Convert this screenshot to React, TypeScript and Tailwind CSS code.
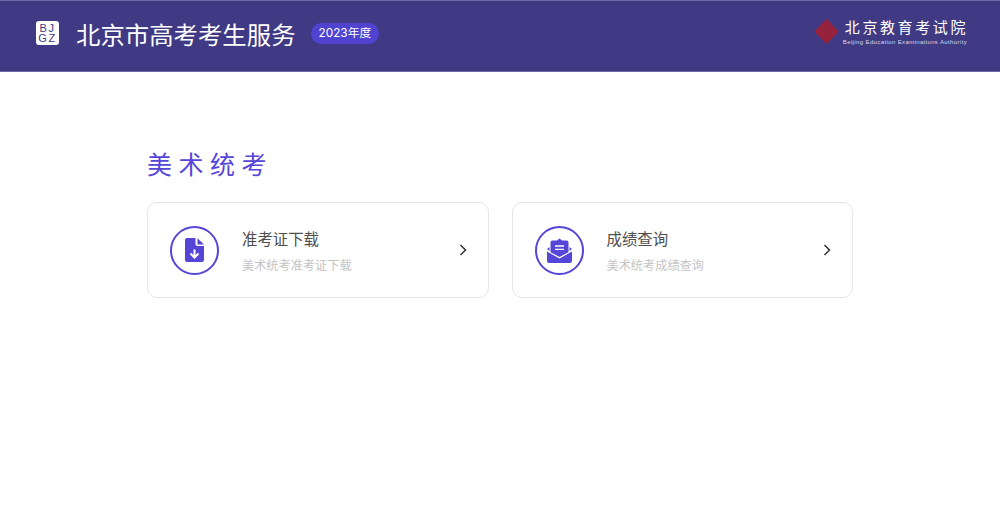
const cjk = "font-['Inter','Noto_Sans_CJK_SC',sans-serif]";

function FileDownloadIcon() {
  return (
    <svg width="19" height="24" viewBox="0 0 19 24">
      <path
        fill="#5546d8"
        d="M2 0H10.5V6C10.5 7.1 11.4 8 12.5 8H19V22C19 23.1 18.1 24 17 24H2C0.9 24 0 23.1 0 22V2C0 0.9 0.9 0 2 0Z"
      />
      <path fill="#5546d8" d="M12.5 0.3L19 6.5H12.5Z" />
      <path d="M9.5 11.5V19M5.5 15.5L9.5 19.5L13.5 15.5" fill="none" stroke="#ffffff" strokeWidth="2" />
    </svg>
  );
}

function MailOpenIcon() {
  return (
    <svg width="25" height="25" viewBox="0 0 25 25">
      <path fill="#5546d8" d="M0 11L2.5 9V13ZM25 11L22.5 9V13Z" />
      <path
        fill="#5546d8"
        d="M0 13.5L12.5 20.5L25 13.5V23C25 24.1 24.1 25 23 25H2C0.9 25 0 24.1 0 23Z"
      />
      <path
        fill="#5546d8"
        fillRule="evenodd"
        d="M5.5 2.5H10L12.5 0.5L15 2.5H19.5C20.6 2.5 21.5 3.4 21.5 4.5V14.2L12.5 19L3.5 14.2V4.5C3.5 3.4 4.4 2.5 5.5 2.5ZM8 7.3V8.7H17V7.3ZM8 10.7V12.1H17V10.7Z"
      />
    </svg>
  );
}

function Chevron() {
  return (
    <svg width="8" height="12" viewBox="0 0 8 12" fill="none" stroke="#333333" strokeWidth="1.5">
      <path d="M1.5 1L6.5 6L1.5 11" />
    </svg>
  );
}

function ServiceCard({ icon, title, sub }: { icon: React.ReactNode; title: string; sub: string }) {
  return (
    <div className="flex h-[96px] flex-1 items-center rounded-[10px] border border-[#e6e6e6] bg-white pl-[22px] pr-[21px]">
      <div className="flex h-[49px] w-[49px] shrink-0 items-center justify-center rounded-full border-2 border-[#5546d8]">
        {icon}
      </div>
      <div className="ml-[23px] flex-1 pt-[2px]">
        <div className="text-[15.4px] leading-[24px] text-[#4d4d4d]">{title}</div>
        <div className="mt-[5px] text-[12.2px] leading-[18px] text-[#c4c4c4]">{sub}</div>
      </div>
      <Chevron />
    </div>
  );
}

export default function App() {
  return (
    <div className={`h-[516px] w-[1000px] overflow-hidden bg-white ${cjk}`}>
      {/* Header */}
      <header className="flex h-[72px] items-center justify-between border-y border-[#6f6aa3] bg-[#403a84] pb-[2px] pl-[36px] pr-[32px]">
        <div className="flex items-center">
          <div className="mb-[5px] flex h-[24px] w-[23px] flex-col items-center justify-center rounded-[3px] bg-white font-['Liberation_Sans',sans-serif] text-[11px] leading-[10px] tracking-[1.5px] text-[#403a84]">
            <span>BJ</span>
            <span>GZ</span>
          </div>
          <h1 className="ml-[17px] text-[24.4px] leading-[32px] text-white">北京市高考考生服务</h1>
          <span className="mb-[4px] ml-[15px] flex h-[21px] items-center rounded-full bg-[#4f43d0] px-[8px] pt-[2px] text-[11.8px] text-white">
            2023年度
          </span>
        </div>
        <div className="mb-[9px] flex items-center">
          <svg width="25" height="27" viewBox="0 0 26 28" className="mr-[4px] mt-[1px]">
            <path d="M13 1L25.5 14L13 27L0.5 14Z" fill="#9a2138" />
            <path
              d="M6 14C9 9 13 7 18 8M8 17C11 13 15 11 20 12M10 20C13 17 16 15 20 16"
              fill="none"
              stroke="#7c2a50"
              strokeWidth="1"
            />
          </svg>
          <div className="flex flex-col">
            <span className="pl-[2px] font-['Noto_Sans_CJK_SC',serif] text-[15px] leading-[23px] tracking-[2.6px] text-white">
              北京教育考试院
            </span>
            <span className="font-['Liberation_Sans',sans-serif] text-[6px] leading-[8px] tracking-[0.38px] text-[#d9d8e8]">
              Beijing Education Examinations Authority
            </span>
          </div>
        </div>
      </header>

      {/* Content */}
      <main className="mx-auto w-[706px] pt-[75px]">
        <h2 className="text-[25px] leading-[36px] tracking-[6.5px] text-[#5546d8]">美术统考</h2>
        <div className="mt-[19px] flex gap-[23px]">
          <ServiceCard icon={<FileDownloadIcon />} title="准考证下载" sub="美术统考准考证下载" />
          <ServiceCard icon={<MailOpenIcon />} title="成绩查询" sub="美术统考成绩查询" />
        </div>
      </main>
    </div>
  );
}
